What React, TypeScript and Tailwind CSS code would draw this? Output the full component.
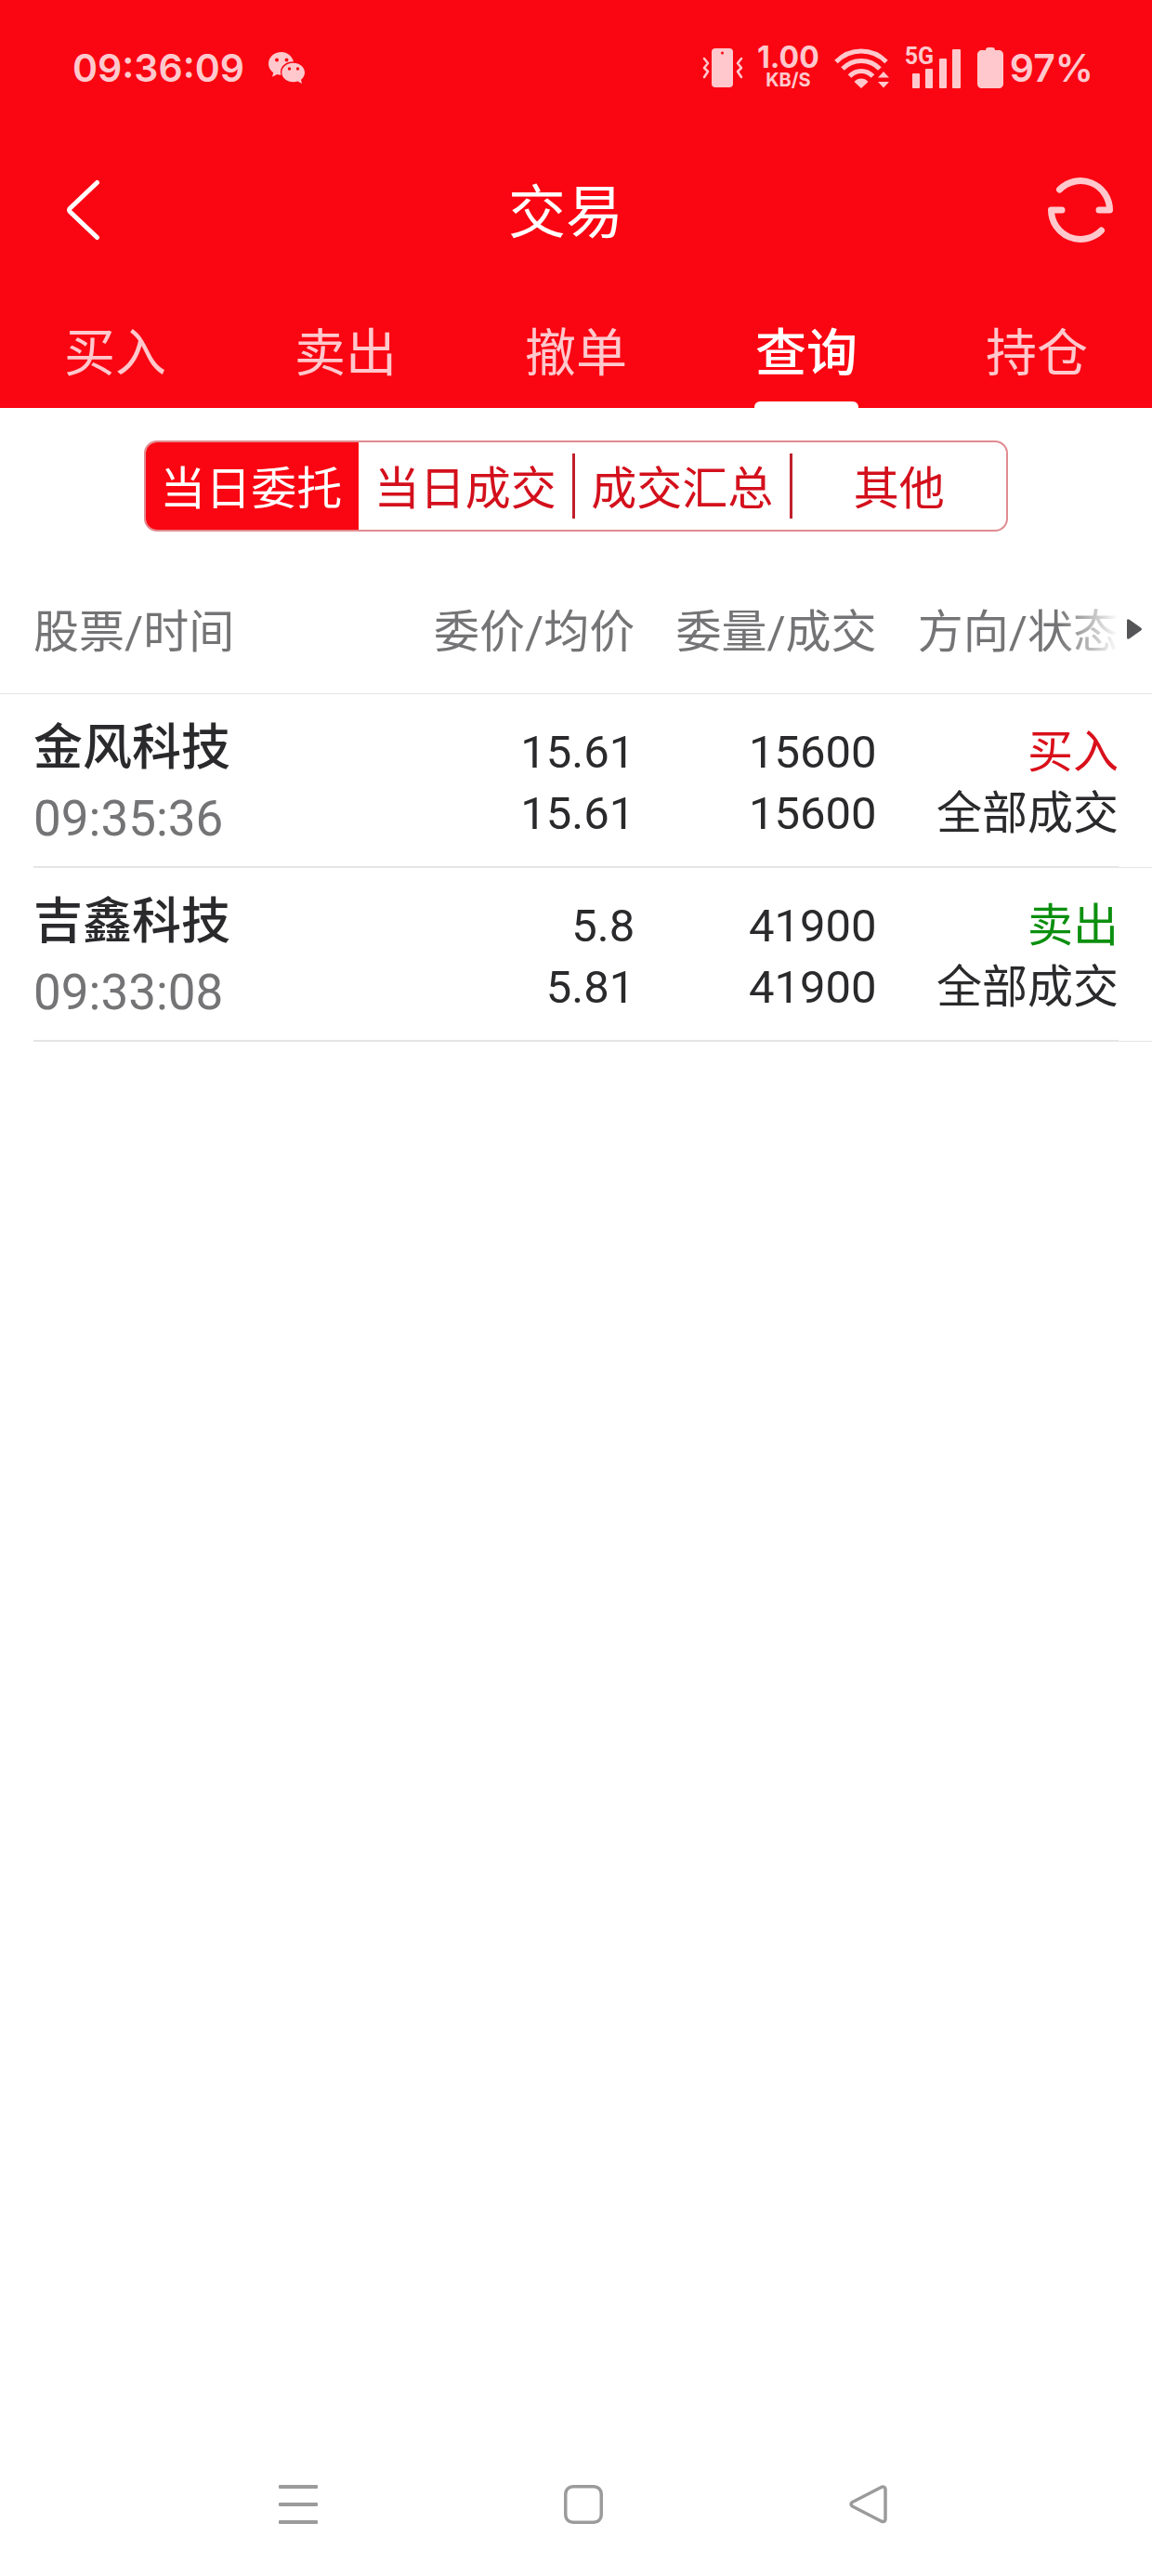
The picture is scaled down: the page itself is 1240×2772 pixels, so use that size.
import React from 'react';

const TABS = ['买入', '卖出', '撤单', '查询', '持仓'];
const ACTIVE_TAB = '查询';

const SEGMENTS = ['当日委托', '当日成交', '成交汇总', '其他'];

type Order = {
  name: string;
  time: string;
  price: string;
  average: string;
  quantity: string;
  filled: string;
  side: 'buy' | 'sell';
  status: string;
};

const ORDERS: Order[] = [
  { name: '金风科技', time: '09:35:36', price: '15.61', average: '15.61', quantity: '15600', filled: '15600', side: 'buy', status: '全部成交' },
  { name: '吉鑫科技', time: '09:33:08', price: '5.8', average: '5.81', quantity: '41900', filled: '41900', side: 'sell', status: '全部成交' },
];

function WeChatIcon() {
  return (
    <svg width="40" height="34" viewBox="0 0 40 34" fill="currentColor" aria-hidden="true">
      <path d="M14 0C6.200 0 0 5.400 0 12.500c0 4 2 7.400 5.200 9.700L4 26.800l5.300-2.700c1.300.4 2.700.6 4.200.6A11.500 11.500 0 0 1 13 21.500C13 15 19 10.300 27 10.300 25.500 4.300 20.300 0 14 0Z" />
      <path d="M26.700 11.800C19.800 11.800 14.300 16.300 14.300 22s5.500 10.200 12.400 10.200c1.800 0 3.400-.3 4.900-.8l4.400 2.600-1-4.300c2.500-1.900 4-4.600 4-7.700 0-5.700-5.400-10.200-12.300-10.200Z" />
      <g fill="#fa0512">
        <circle cx="9" cy="8.500" r="1.900" />
        <circle cx="19.500" cy="8.500" r="1.900" />
        <circle cx="22.500" cy="18" r="1.700" />
        <circle cx="31.500" cy="18" r="1.700" />
      </g>
    </svg>
  );
}

function VibrateIcon() {
  return (
    <svg width="44" height="42" viewBox="0 0 44 42" fill="none" aria-hidden="true">
      <rect x="10" y="0" width="23" height="42" rx="4" fill="currentColor" />
      <circle cx="21.500" cy="5" r="1.500" fill="#fa0512" />
      <path d="M2 11l4 5-4 5 4 4-4 6M42 11l-4 5 4 5-4 4 4 6" stroke="currentColor" strokeWidth="2.500" strokeLinejoin="round" strokeLinecap="round" />
    </svg>
  );
}

function WifiIcon() {
  return (
    <svg width="60" height="43" viewBox="0 0 60 43" fill="none" aria-hidden="true">
      <g stroke="currentColor" strokeWidth="5">
        <path d="M2 14.500C17 -.8 41 -.8 56 14.500" />
        <path d="M9 22C20 10.500 38 10.500 49 22" />
        <path d="M16.500 30C23.500 22.500 34.500 22.500 41.500 30" />
      </g>
      <path d="M21.500 36c4-4.600 11-4.600 15 0L29 43Z" fill="currentColor" />
      <path d="M47 31.500 53 25l6 6.500ZM47 36h12l-6 6.500Z" fill="currentColor" />
    </svg>
  );
}

function SignalIcon() {
  return (
    <svg width="60" height="44" viewBox="0 0 60 44" fill="currentColor" aria-hidden="true">
      <rect x="8" y="28" width="8" height="16" rx="1" />
      <rect x="22" y="23" width="8" height="21" rx="1" />
      <rect x="37" y="12" width="8" height="32" rx="1" />
      <rect x="51" y="2" width="9" height="42" rx="1" />
    </svg>
  );
}

function BatteryIcon() {
  return (
    <svg width="28" height="44" viewBox="0 0 28 44" fill="currentColor" aria-hidden="true">
      <path d="M9 3c0-2 1-3 3-3h4c2 0 3 1 3 3h4c3 0 5 2 5 5v31c0 3-2 5-5 5H5c-3 0-5-2-5-5V8c0-3 2-5 5-5Z" />
    </svg>
  );
}

function StatusBar() {
  return (
    <div className="flex h-[146px] items-center justify-between pl-[78px] pr-[63px] font-['Inter',sans-serif] font-semibold text-[#ffc8cd]">
      <div className="flex items-center gap-[26px]">
        <span className="text-[41px] leading-none">09:36:09</span>
        <WeChatIcon />
      </div>
      <div className="flex items-center">
        <VibrateIcon />
        <div className="ml-[15px] flex flex-col items-center font-bold">
          <span className="text-[32px] leading-[26px]">1.00</span>
          <span className="text-[20px] leading-[22px]">KB/S</span>
        </div>
        <div className="ml-4">
          <WifiIcon />
        </div>
        <div className="relative ml-4">
          <SignalIcon />
          <span className="absolute left-0 top-0 font-['Roboto',sans-serif] text-[25px] font-bold leading-5">5G</span>
        </div>
        <div className="ml-[18px] flex items-center gap-[7px]">
          <BatteryIcon />
          <span className="text-[41px] leading-none">97%</span>
        </div>
      </div>
    </div>
  );
}

function TitleBar() {
  return (
    <div className="flex h-40 items-center pl-[70px] pr-[42px] text-white">
      <button type="button" aria-label="返回" className="flex w-12 items-center">
        <svg width="38" height="66" viewBox="0 0 38 66" fill="none" aria-hidden="true">
          <path d="M34.500 3.500 5.500 31q-2 2 0 4L34.500 62.500" stroke="currentColor" strokeWidth="5" strokeLinecap="round" />
        </svg>
      </button>
      <h1 className="flex-1 pr-7 pt-2 text-center text-[62px] leading-none">交易</h1>
      <button type="button" aria-label="刷新" className="text-[#ffc8cd]">
        <svg width="70" height="70" viewBox="0 0 70 70" fill="none" stroke="currentColor" strokeWidth="7" strokeLinecap="round" strokeLinejoin="round" aria-hidden="true">
          <path d="M12.500 13A31.500 31.500 0 0 1 66.500 35H55" />
          <path d="M57.500 57A31.500 31.500 0 0 1 3.500 35H15" />
        </svg>
      </button>
    </div>
  );
}

function MainTabs() {
  return (
    <nav className="grid h-[133px] grid-cols-5">
      {TABS.map((tab) => {
        const active = tab === ACTIVE_TAB;
        return (
          <button
            key={tab}
            type="button"
            aria-current={active ? 'page' : undefined}
            className={
              active
                ? 'flex flex-col items-center justify-between pt-[34px] text-[55px] font-medium leading-[80px] text-white'
                : 'flex flex-col items-center justify-between pt-[34px] text-[55px] leading-[80px] text-[#ffc8cd]'
            }
          >
            {tab}
            {active && <span className="h-[7px] w-28 rounded-t-md bg-white" />}
          </button>
        );
      })}
    </nav>
  );
}

function SegmentBar() {
  return (
    <div className="mx-auto mt-[35px] flex h-[98px] w-3/4 items-center overflow-hidden rounded-[14px] border-2 border-[#e08c91] text-[49px] leading-none">
      {SEGMENTS.map((label, i) => (
        <React.Fragment key={label}>
          {i > 1 && <span className="h-[70px] w-[3px] bg-[#c01f2a]" />}
          <button
            type="button"
            aria-pressed={i === 0}
            className={
              i === 0
                ? '-my-0.5 -ml-0.5 h-[98px] flex-1 bg-[#fa0512] pt-1.5 text-white'
                : 'h-full flex-1 pt-1.5 text-[#d3101c]'
            }
          >
            {label}
          </button>
        </React.Fragment>
      ))}
    </div>
  );
}

function OrderTable() {
  return (
    <table className="mt-9 w-full table-fixed border-separate border-spacing-0 text-right text-[49px] leading-[66px] text-[#2a2a2c]">
      <thead>
        <tr className="h-[139px] text-[#747476] [&>*]:border-b [&>*]:border-[#e5e5e6] [&>*]:px-0 [&>*]:pb-0 [&>*]:font-normal">
          <td className="w-9" />
          <th scope="col" className="pt-2 text-left">股票/时间</th>
          <th scope="col" className="w-[21%] pt-2">委价/均价</th>
          <th scope="col" className="w-[21%] pt-2">委量/成交</th>
          <th scope="col" className="w-[21%] pt-2">
            <span className="bg-linear-to-r from-[#747476] from-70% to-white bg-clip-text text-transparent">方向/状态</span>
          </th>
          <td className="w-9 pt-0">
            <svg className="ml-[9px]" width="17" height="22" viewBox="0 0 17 22" fill="#555557" aria-hidden="true">
              <path d="M0 2Q0-1 3 1L15 9.500q2 1.500 0 3L3 21Q0 23 0 20Z" />
            </svg>
          </td>
        </tr>
      </thead>
      <tbody>
        {ORDERS.map((o) => (
          <tr key={o.time} className="h-[187px] [&>*]:border-[#e5e5e6] [&>*]:px-0 [&>*]:pb-0 [&>*]:pt-1.5">
            <td />
            <th scope="row" className="border-b-2 text-left text-[53px] font-normal">
              <div className="font-medium leading-[76px]">{o.name}</div>
              <div className="leading-[76px] text-[#747476]">{o.time}</div>
            </th>
            <td className="border-b-2">
              <div>{o.price}</div>
              <div>{o.average}</div>
            </td>
            <td className="border-b-2">
              <div>{o.quantity}</div>
              <div>{o.filled}</div>
            </td>
            <td className="border-b-2">
              <div className={o.side === 'buy' ? 'text-[#d9101b]' : 'text-[#0c8f0f]'}>
                {o.side === 'buy' ? '买入' : '卖出'}
              </div>
              <div>{o.status}</div>
            </td>
            <td className="border-b" />
          </tr>
        ))}
      </tbody>
    </table>
  );
}

function SystemNav() {
  return (
    <nav className="grid h-[154px] grid-cols-3 items-center justify-items-center pl-[168px] pr-[152px] text-[#9b9b9b]">
      <button type="button" aria-label="最近任务">
        <svg width="42" height="42" viewBox="0 0 42 42" fill="currentColor" aria-hidden="true">
          <rect width="42" height="4" rx="1" />
          <rect y="19" width="42" height="4" rx="1" />
          <rect y="38" width="42" height="4" rx="1" />
        </svg>
      </button>
      <button type="button" aria-label="主屏幕">
        <svg width="42" height="42" viewBox="0 0 42 42" fill="none" stroke="currentColor" strokeWidth="3.500" aria-hidden="true">
          <rect x="1.750" y="1.750" width="38.500" height="38.500" rx="8" />
        </svg>
      </button>
      <button type="button" aria-label="后退">
        <svg width="42" height="42" viewBox="0 0 42 42" fill="none" stroke="currentColor" strokeWidth="3.500" strokeLinejoin="round" aria-hidden="true">
          <path d="M34.500 2.500 3.500 18.500q-3 2 0 4.500L34.500 39q4 1.500 4.500-2V4.500q-.5-3.500-4.500-2Z" />
        </svg>
      </button>
    </nav>
  );
}

export default function App() {
  return (
    <div className="flex min-h-screen flex-col bg-white font-['Roboto','Noto_Sans_CJK_SC',sans-serif]">
      <header className="bg-[#fa0512]">
        <StatusBar />
        <TitleBar />
        <MainTabs />
      </header>
      <main className="flex-1">
        <SegmentBar />
        <OrderTable />
      </main>
      <SystemNav />
    </div>
  );
}
